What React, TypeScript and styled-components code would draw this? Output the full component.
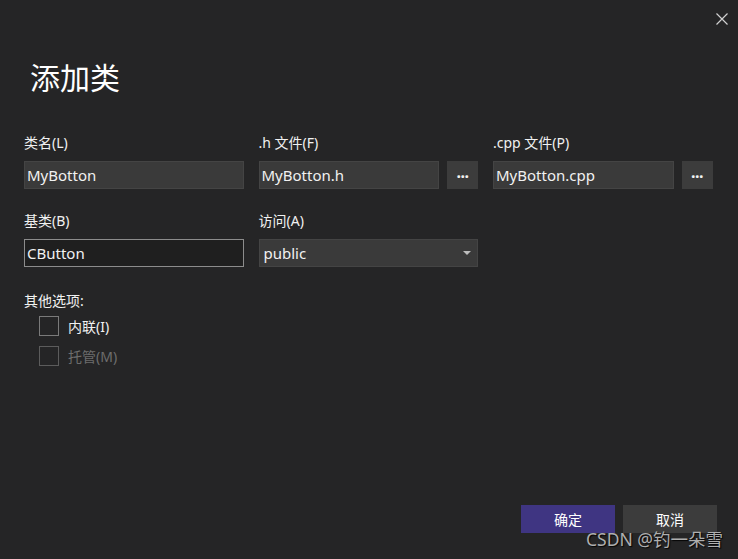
import styled, { createGlobalStyle } from "styled-components";

const GlobalStyle = createGlobalStyle`
  html, body {
    margin: 0;
    padding: 0;
    background: #252526;
  }
  body {
    font-family: "Segoe UI", "Noto Sans", "Noto Sans CJK SC", sans-serif;
    color: #f1f1f1;
  }
`;

const Dialog = styled.div`
  position: relative;
  width: 738px;
  height: 559px;
  box-sizing: border-box;
  display: flex;
  flex-direction: column;
  background: #252526;
  overflow: hidden;
`;

const TitleBar = styled.div`
  height: 38px;
  display: flex;
  justify-content: flex-end;
  align-items: center;
  padding-right: 2px;
`;

const CloseButton = styled.button`
  width: 28px;
  height: 28px;
  border: none;
  background: transparent;
  padding: 0;
  display: flex;
  align-items: center;
  justify-content: center;
  color: #d0d0d0;
`;

const Heading = styled.h1`
  margin: 20px 0 0 30px;
  font-size: 30px;
  line-height: 40px;
  font-weight: 400;
  color: #ffffff;
`;

const Body = styled.div`
  padding: 36px 26px 0 24px;
  display: flex;
  flex-direction: column;
`;

const FieldGrid = styled.div`
  display: grid;
  grid-template-columns: repeat(3, 219.5px);
  column-gap: 15px;
  row-gap: 23px;
`;

const Field = styled.div`
  display: flex;
  flex-direction: column;
  gap: 9px;
`;

const Label = styled.label`
  font-size: 14px;
  line-height: 18px;
  color: #f1f1f1;
`;

const InputRow = styled.div`
  display: flex;
  gap: 8px;
`;

const TextBox = styled.div<{ $focused?: boolean }>`
  flex: 1;
  height: 28px;
  box-sizing: border-box;
  display: flex;
  align-items: center;
  padding: 0 2px;
  font-size: 15px;
  color: #f1f1f1;
  background: ${(p) => (p.$focused ? "#1f1f1f" : "#3a3a3a")};
  border: 1px solid ${(p) => (p.$focused ? "#8c8c8c" : "#444444")};
`;

const BrowseButton = styled.button`
  width: 31px;
  height: 28px;
  border: none;
  padding: 0 0 6px;
  background: #3c3c3c;
  color: #f1f1f1;
  font-family: inherit;
  font-size: 16px;
  font-weight: 700;
  letter-spacing: -0.5px;
`;

const Select = styled.div`
  height: 28px;
  box-sizing: border-box;
  display: flex;
  align-items: center;
  justify-content: space-between;
  padding: 0 6px 0 4px;
  font-size: 15px;
  background: #3a3a3a;
  border: 1px solid #444444;
`;

const Caret = styled.span`
  width: 0;
  height: 0;
  border-left: 4px solid transparent;
  border-right: 4px solid transparent;
  border-top: 4px solid #bdbdbd;
`;

const Options = styled.div`
  margin-top: 25px;
  display: flex;
  flex-direction: column;
`;

const OptionList = styled.div`
  margin-top: 6px;
  padding-left: 15px;
  display: flex;
  flex-direction: column;
  gap: 10px;
`;

const Option = styled.div<{ $disabled?: boolean }>`
  display: flex;
  align-items: center;
  gap: 9px;
  font-size: 14px;
  color: ${(p) => (p.$disabled ? "#6d6d6d" : "#f1f1f1")};
`;

const Box = styled.span<{ $disabled?: boolean }>`
  width: 20px;
  height: 20px;
  box-sizing: border-box;
  border: 1px solid ${(p) => (p.$disabled ? "#5c5c5c" : "#7a7a7a")};
`;

const Footer = styled.div`
  margin-top: auto;
  display: flex;
  justify-content: flex-end;
  gap: 8px;
  padding: 0 21px 26px 0;
`;

const DialogButton = styled.button<{ $primary?: boolean }>`
  width: 94px;
  height: 28px;
  border: none;
  font-family: inherit;
  font-size: 14px;
  color: #ffffff;
  background: ${(p) => (p.$primary ? "#3f3582" : "#3c3c3c")};
`;

const Watermark = styled.div`
  position: absolute;
  right: 15px;
  bottom: 8px;
  font-size: 17.5px;
  color: #bdbdbd;
  text-shadow: 1px 1px 1px #000;
  opacity: 0.9;
`;

const App = () => {
  return (
    <Dialog>
      <GlobalStyle />
      <TitleBar>
        <CloseButton aria-label="关闭">
          <svg width="12" height="12" viewBox="0 0 12 12">
            <path d="M0.5 0.5 L11.5 11.5 M11.5 0.5 L0.5 11.5" stroke="currentColor" strokeWidth="1.2" />
          </svg>
        </CloseButton>
      </TitleBar>
      <Heading>添加类</Heading>
      <Body>
        <FieldGrid>
          <Field>
            <Label>类名(L)</Label>
            <TextBox>MyBotton</TextBox>
          </Field>
          <Field>
            <Label>.h 文件(F)</Label>
            <InputRow>
              <TextBox>MyBotton.h</TextBox>
              <BrowseButton>...</BrowseButton>
            </InputRow>
          </Field>
          <Field>
            <Label>.cpp 文件(P)</Label>
            <InputRow>
              <TextBox>MyBotton.cpp</TextBox>
              <BrowseButton>...</BrowseButton>
            </InputRow>
          </Field>
          <Field>
            <Label>基类(B)</Label>
            <TextBox $focused>CButton</TextBox>
          </Field>
          <Field>
            <Label>访问(A)</Label>
            <Select>
              public
              <Caret />
            </Select>
          </Field>
        </FieldGrid>
        <Options>
          <Label>其他选项:</Label>
          <OptionList>
            <Option>
              <Box />
              内联(I)
            </Option>
            <Option $disabled>
              <Box $disabled />
              托管(M)
            </Option>
          </OptionList>
        </Options>
      </Body>
      <Footer>
        <DialogButton $primary>确定</DialogButton>
        <DialogButton>取消</DialogButton>
      </Footer>
      <Watermark>CSDN @钓一朵雪</Watermark>
    </Dialog>
  );
};

export default App;
